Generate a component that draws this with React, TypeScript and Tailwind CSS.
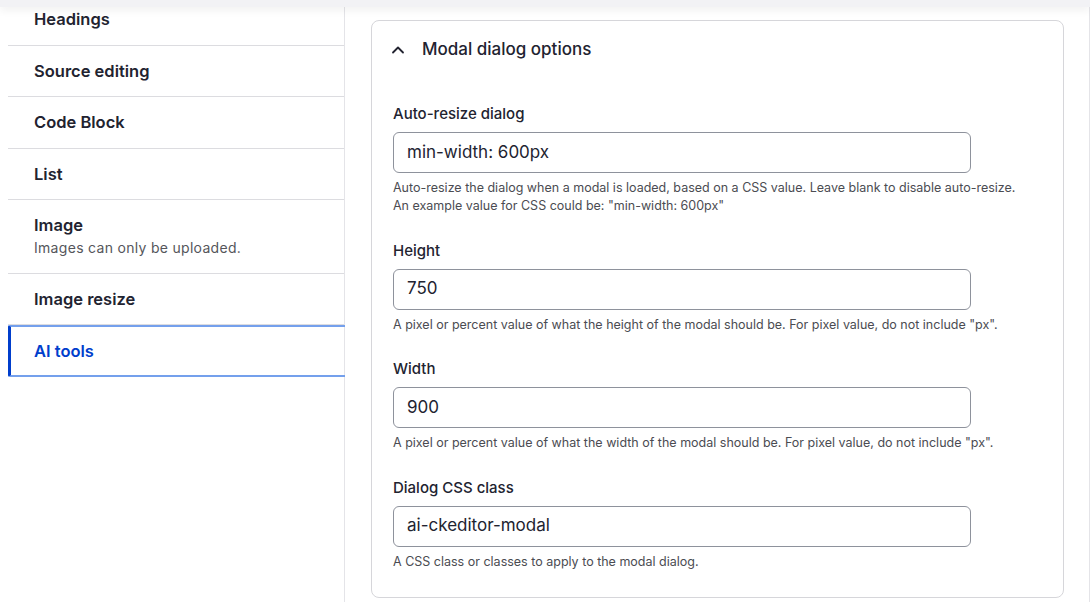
import { ChevronUp } from "lucide-react";

const tabs = [
  { title: "Headings", first: true },
  { title: "Source editing" },
  { title: "Code Block" },
  { title: "List" },
  { title: "Image", desc: "Images can only be uploaded." },
  { title: "Image resize" },
];

const fields = [
  {
    label: "Auto-resize dialog",
    value: "min-width: 600px",
    desc: [
      "Auto-resize the dialog when a modal is loaded, based on a CSS value. Leave blank to disable auto-resize.",
      'An example value for CSS could be: "min-width: 600px"',
    ],
  },
  {
    label: "Height",
    value: "750",
    desc: ['A pixel or percent value of what the height of the modal should be. For pixel value, do not include "px".'],
  },
  {
    label: "Width",
    value: "900",
    desc: ['A pixel or percent value of what the width of the modal should be. For pixel value, do not include "px".'],
  },
  {
    label: "Dialog CSS class",
    value: "ai-ckeditor-modal",
    desc: ["A CSS class or classes to apply to the modal dialog."],
  },
];

export default function App() {
  return (
    <div className="h-[602px] overflow-hidden bg-white font-['Inter',sans-serif] text-[#222330]">
      {/* sticky header edge */}
      <div className="relative z-10 h-[7px] bg-[#f2f2f5] shadow-[0_3px_8px_rgba(0,0,0,0.07)]" />

      <div className="flex h-[595px]">
        {/* Vertical tabs */}
        <div className="w-[345px] shrink-0 border-r border-[#e4e4e8] pl-[8px]">
          {tabs.map((t) => (
            <div
              key={t.title}
              className={`border-b border-[#dcdce0] pl-[26px] ${
                t.first ? "pt-[1px] pb-[15px]" : t.desc ? "pt-[14px] pb-[15px]" : "pt-[14px] pb-[14.25px]"
              }`}
            >
              <div className="text-[16.5px] font-semibold leading-[22px]">{t.title}</div>
              {t.desc && (
                <div className="mt-[2px] text-[14px] leading-[20px] text-[#55565b] tracking-[0.3px]">
                  {t.desc}
                </div>
              )}
            </div>
          ))}
          <div className="-mr-px rounded-l-[2px] border-y-2 border-l-[3px] border-y-[#74a0ec] border-l-[#003ecc] py-[12px] pl-[23px]">
            <div className="text-[16.5px] font-semibold leading-[24px] text-[#003ecc]">AI tools</div>
          </div>
        </div>

        {/* Content */}
        <div className="flex-1 border-r border-[#e4e4e8] pt-[13px] pl-[26px] pr-[25px]">
          <div className="rounded-[8px] border border-[#d6d6da] pb-[26px]">
            <div className="flex h-[58px] items-center pl-[16px]">
              <ChevronUp className="h-[20px] w-[20px] text-[#222330]" strokeWidth={2.2} />
              <span className="ml-[14px] text-[17px] font-medium">Modal dialog options</span>
            </div>
            <div className="pl-[21px] pr-[20px]">
              {fields.map((f, i) => (
                <div key={f.label} className={i === 0 ? "mt-[25px]" : "mt-[25.5px]"}>
                  <div className="text-[15px] font-medium leading-[20px]">{f.label}</div>
                  <div className="mt-[8px] flex h-[41px] w-[578px] items-center rounded-[6px] border border-[#8e929c] px-[13px] text-[17px]">
                    {f.value}
                  </div>
                  <div className="mt-[6px] text-[12.5px] leading-[18px] text-[#4b4c52]">
                    {f.desc.map((d) => (
                      <div key={d}>{d}</div>
                    ))}
                  </div>
                </div>
              ))}
            </div>
          </div>
        </div>
      </div>
    </div>
  );
}
